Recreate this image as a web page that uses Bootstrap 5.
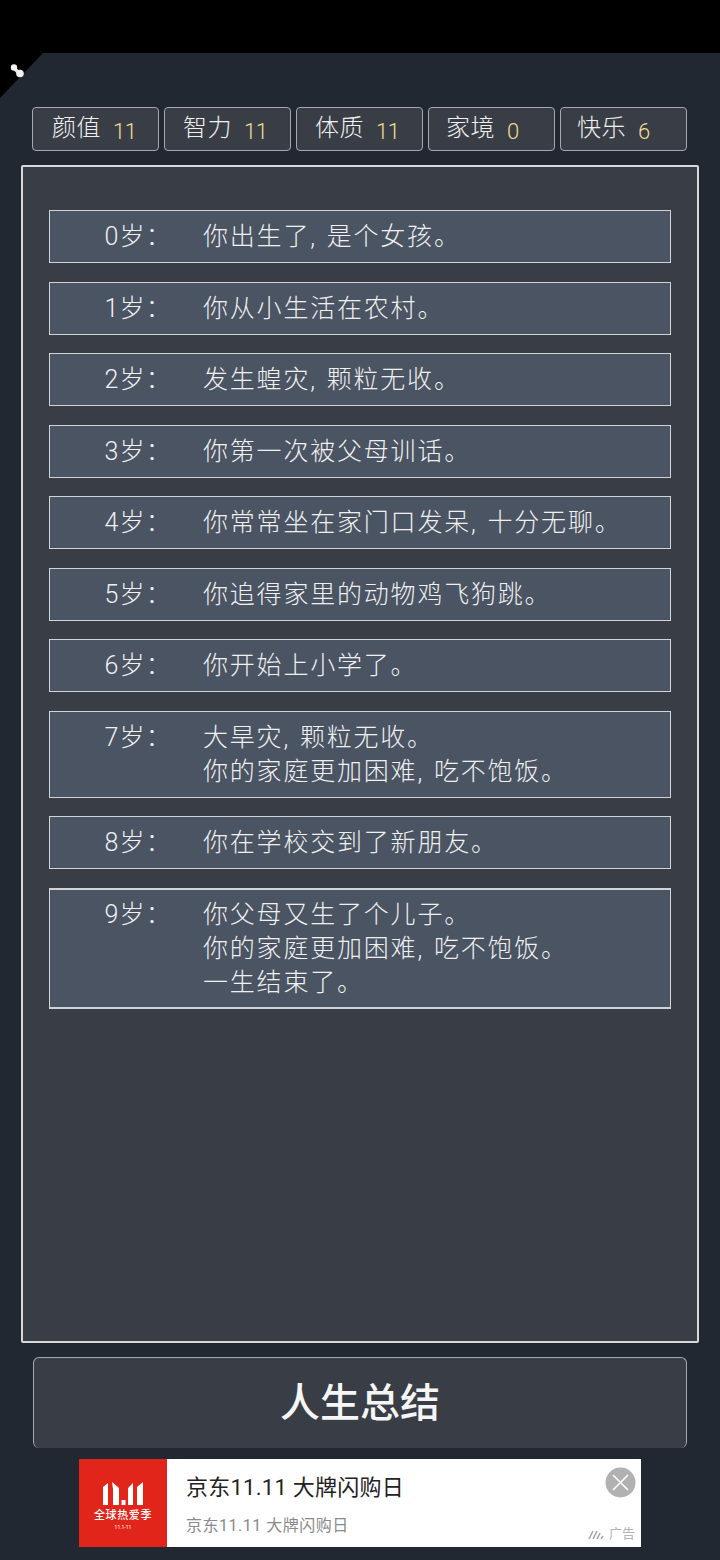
<!DOCTYPE html>
<html lang="zh-CN">
<head>
<meta charset="utf-8">
<title>人生重开</title>
<link href="https://cdn.jsdelivr.net/npm/bootstrap@5.3.0/dist/css/bootstrap.min.css" rel="stylesheet">
<style>
html,body{height:1560px;overflow:hidden}
body{background:#222831;color:#f0f0f0;font-family:Roboto,"Noto Sans CJK SC","Noto Sans",sans-serif;font-weight:300;position:relative}
.status-strip{height:53px;background:#000}
.corner-notch{position:absolute;left:0;top:53px;width:43px;height:45px}
.stat-strip{margin:54px 33px 0 32px;height:44px;gap:5px}
.stat-tab{width:127px;height:44px;background:#393e46;border:1px solid #a5a8ac;border-radius:4px;padding-left:18px;font-size:24px;letter-spacing:.5px;line-height:40px}
.stat-tab:first-child{padding-left:19px}
.stat-tab:nth-child(4){padding-left:17px}
.stat-tab:nth-child(5){padding-left:16px}
.stat-name{width:61px}
.stat-val{color:#f2dc94;font-size:22px;letter-spacing:-.5px;line-height:48px}
.life-panel{margin:14px 21px 0 21px;height:1178px;background:#393e46;border:2px solid #d8d8d8;border-radius:2px;padding:43px 26px 0;gap:18.5px}
.life-row{background:#4a5463;border:1px solid #d0d3d8;font-size:25px;letter-spacing:1.8px;word-spacing:2px;line-height:34px;padding:9px 0 8px}
.life-row.last-row{border-width:2px 1px;padding:8px 0 7px}
.life-age{width:122px;text-align:right;flex:none;letter-spacing:1.2px}
.life-text{margin-left:31px}
.summary-btn{margin:14px 33px 0;height:91px;width:654px;background:#393e46;border:1px solid #a5a8ac;border-bottom:0;border-radius:6px;color:#f5f5f5;font-size:40px;font-weight:500;line-height:92px;text-align:center}
.ad-box{margin:11px 0 0 79px;width:562px;height:88px;background:#fff;position:relative}
.ad-logo{width:88px;height:88px;background:#e1251b;color:#fff;flex:none;padding-top:23px}
.ad-slogan{font-size:11px;font-weight:500;letter-spacing:.6px;line-height:15px;margin-top:3px}
.ad-date{font-size:5px;line-height:8px;font-weight:400}
.ad-copy{padding:13px 0 0 19px}
.ad-title{font-size:22px;line-height:32px;color:#222;font-weight:400;letter-spacing:.25px}
.ad-sub{font-size:16px;line-height:24px;margin-top:10px;color:#8a8a8a;font-weight:400;letter-spacing:.5px}
.ad-close{position:absolute;right:5px;top:8px;width:31px;height:31px}
.ad-mark{position:absolute;right:6px;bottom:6px;font-size:13px;line-height:14px;color:#b4b4b4;font-weight:400;gap:3px}
</style>
</head>
<body>
<div class="status-strip"></div>
<svg class="corner-notch" viewBox="0 0 43 45" aria-hidden="true">
  <polygon points="0,0 43,0 0,45" fill="#000"/>
  <path d="M14 15 L20 21" stroke="#e8e8e8" stroke-width="3.5" stroke-linecap="round"/>
  <circle cx="14" cy="14.5" r="3.2" fill="#f2f2f2"/>
  <circle cx="20" cy="20.5" r="3.8" fill="#f2f2f2"/>
</svg>

<div class="stat-strip d-flex">
  <div class="stat-tab d-flex"><span class="stat-name">颜值</span><span class="stat-val">11</span></div>
  <div class="stat-tab d-flex"><span class="stat-name">智力</span><span class="stat-val">11</span></div>
  <div class="stat-tab d-flex"><span class="stat-name">体质</span><span class="stat-val">11</span></div>
  <div class="stat-tab d-flex"><span class="stat-name">家境</span><span class="stat-val">0</span></div>
  <div class="stat-tab d-flex"><span class="stat-name">快乐</span><span class="stat-val">6</span></div>
</div>

<div class="life-panel d-flex flex-column">
  <div class="life-row d-flex"><div class="life-age">0岁：</div><div class="life-text">你出生了, 是个女孩。</div></div>
  <div class="life-row d-flex"><div class="life-age">1岁：</div><div class="life-text">你从小生活在农村。</div></div>
  <div class="life-row d-flex"><div class="life-age">2岁：</div><div class="life-text">发生蝗灾, 颗粒无收。</div></div>
  <div class="life-row d-flex"><div class="life-age">3岁：</div><div class="life-text">你第一次被父母训话。</div></div>
  <div class="life-row d-flex"><div class="life-age">4岁：</div><div class="life-text">你常常坐在家门口发呆, 十分无聊。</div></div>
  <div class="life-row d-flex"><div class="life-age">5岁：</div><div class="life-text">你追得家里的动物鸡飞狗跳。</div></div>
  <div class="life-row d-flex"><div class="life-age">6岁：</div><div class="life-text">你开始上小学了。</div></div>
  <div class="life-row d-flex"><div class="life-age">7岁：</div><div class="life-text">大旱灾, 颗粒无收。<br>你的家庭更加困难, 吃不饱饭。</div></div>
  <div class="life-row d-flex"><div class="life-age">8岁：</div><div class="life-text">你在学校交到了新朋友。</div></div>
  <div class="life-row last-row d-flex"><div class="life-age">9岁：</div><div class="life-text">你父母又生了个儿子。<br>你的家庭更加困难, 吃不饱饭。<br>一生结束了。</div></div>
</div>

<div class="summary-btn">人生总结</div>

<div class="ad-box d-flex">
  <div class="ad-logo text-center">
    <svg width="40" height="23" viewBox="0 0 40 23" class="d-block mx-auto" aria-hidden="true">
      <g fill="#fff">
        <polygon points="0,5 5,1 5,23 0,23"/>
        <polygon points="9,0 16,6 16,23 10,23 10,7"/>
        <polygon points="30,1 25,6 25,23 30,23"/>
        <polygon points="34,5 40,0 40,23 34,23"/>
        <rect x="18.5" y="18" width="4" height="5"/>
      </g>
    </svg>
    <div class="ad-slogan">全球热爱季</div>
    <div class="ad-date">11.1-11</div>
  </div>
  <div class="ad-copy">
    <div class="ad-title">京东11.11 大牌闪购日</div>
    <div class="ad-sub">京东11.11 大牌闪购日</div>
  </div>
  <svg class="ad-close" viewBox="0 0 31 31" aria-label="关闭">
    <circle cx="15.5" cy="15.5" r="15" fill="#b1b1b1"/>
    <path d="M8 8 L23 23 M23 8 L8 23" stroke="#fff" stroke-width="1.6"/>
  </svg>
  <div class="ad-mark d-flex align-items-center">
    <svg width="18" height="9" viewBox="0 0 18 9" aria-hidden="true"><path d="M1 9 L5 1 M5 9 L9 1 M9 9 L12 3 M13 9 L15 6" stroke="#a8a8a8" stroke-width="1.6" fill="none"/></svg>
    <span>广告</span>
  </div>
</div>
<script src="https://cdn.jsdelivr.net/npm/bootstrap@5.3.0/dist/js/bootstrap.bundle.min.js"></script>
</body>
</html>
